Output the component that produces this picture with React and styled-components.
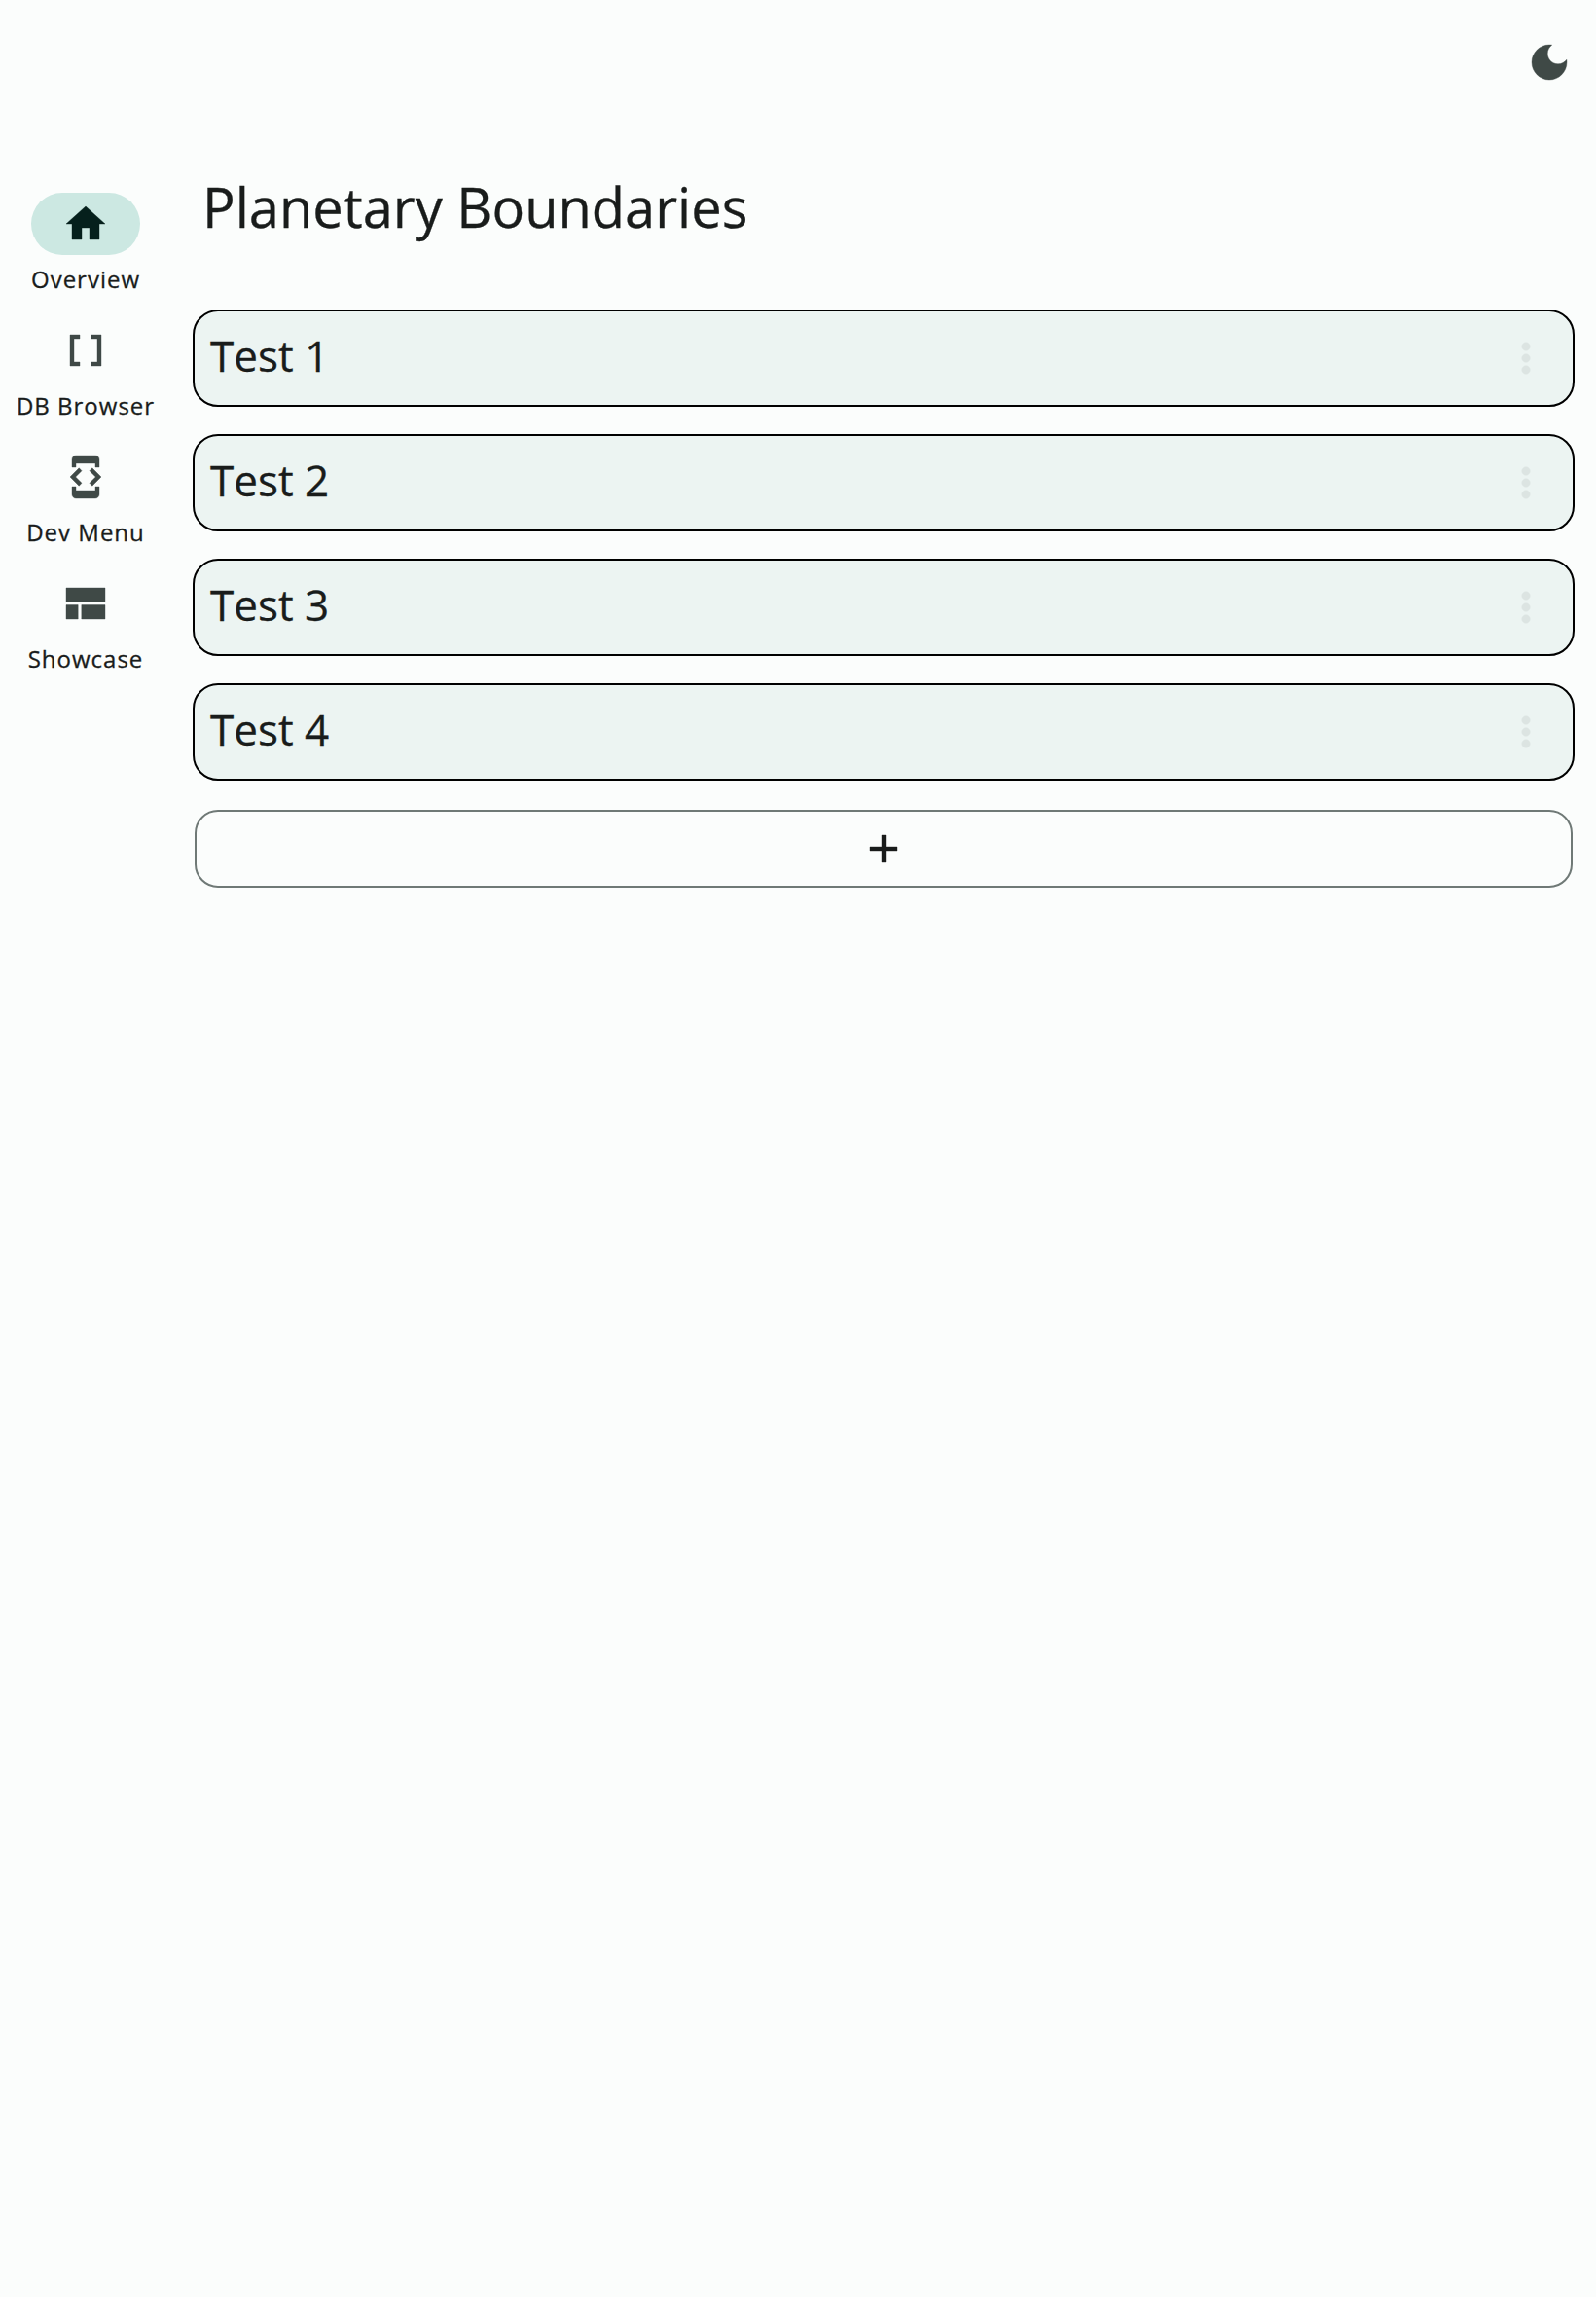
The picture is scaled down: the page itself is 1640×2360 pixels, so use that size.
import React from "react";
import styled, { createGlobalStyle } from "styled-components";

const Global = createGlobalStyle`
  *, *::before, *::after { box-sizing: border-box; }
  html, body { margin: 0; padding: 0; background: #fbfdfc; }
  body { font-family: "Open Sans", "Noto Sans", sans-serif; color: #191c1b; -webkit-text-stroke: 0.3px currentColor; }
  button { font: inherit; color: inherit; margin: 0; padding: 0; border: 0; background: none; cursor: pointer; }
`;

const Page = styled.div`
  display: flex;
  flex-direction: column;
  width: 100%;
  min-height: 2360px;
  background: #fbfdfc;
`;

const TopBar = styled.header`
  display: flex;
  justify-content: flex-end;
  align-items: center;
  height: 128px;
  padding-right: 8px;
`;

const IconButton = styled.button`
  display: flex;
  align-items: center;
  justify-content: center;
  width: ${(p) => p.$size}px;
  height: ${(p) => p.$size}px;
  color: ${(p) => p.$color};
`;

const Icon = styled.svg`
  display: block;
  width: 48px;
  height: 48px;
  fill: currentColor;
  stroke: currentColor;
  stroke-width: ${(p) => p.$stroke};
`;

const Body = styled.div`
  display: flex;
  flex: 1;
`;

const Rail = styled.nav`
  display: flex;
  flex-direction: column;
  flex: none;
  width: 176px;
  padding-top: 70px;
`;

const RailItem = styled.button`
  display: flex;
  flex-direction: column;
  align-items: center;
  height: 130px;
  color: ${(p) => (p.$active ? "#05201c" : "#3f4946")};
`;

const Indicator = styled.span`
  display: flex;
  align-items: center;
  justify-content: center;
  width: 112px;
  height: 64px;
  border-radius: 32px;
  background: ${(p) => (p.$active ? "#cce8e2" : "transparent")};
`;

const RailLabel = styled.span`
  margin-top: 9px;
  font-size: 24px;
  line-height: 32px;
  letter-spacing: 1px;
  white-space: nowrap;
  color: #191c1b;
`;

const Main = styled.main`
  display: flex;
  flex-direction: column;
  flex: 1;
  padding: 48px 22px 0;
`;

const Title = styled.h1`
  margin: 0 0 70px;
  padding-left: 10px;
  font-size: 56px;
  font-weight: 400;
  line-height: 72px;
`;

const List = styled.ul`
  display: flex;
  flex-direction: column;
  gap: 28px;
  margin: 0;
  padding: 0;
  list-style: none;
`;

const Card = styled.li`
  display: flex;
  align-items: center;
  justify-content: space-between;
  height: 100px;
  padding: 0 0 0 16px;
  border: 2px solid #000;
  border-radius: 26px;
  background: #ecf4f2;
`;

const CardTitle = styled.span`
  padding-bottom: 6px;
  font-size: 44px;
  line-height: 56px;
`;

const AddButton = styled.button`
  display: flex;
  align-items: center;
  justify-content: center;
  height: 80px;
  margin: 30px 2px 0;
  && { border: 2px solid #6f7976; }
  border-radius: 24px;
`;

const ICONS = {
  moon: "M12 3c-4.97 0-9 4.03-9 9s4.03 9 9 9 9-4.03 9-9c0-.46-.04-.92-.1-1.36-.98 1.37-2.58 2.26-4.4 2.26-2.98 0-5.4-2.42-5.4-5.4 0-1.81.89-3.42 2.26-4.4-.44-.06-.9-.1-1.36-.1z",
  home: "M10 20v-6h4v6h5v-8h3L12 3 2 12h3v8z",
  array: "M15 4v2h3v12h-3v2h5V4zM4 20h5v-2H6V6h3V4H4z",
  dev: "M7 5h10v2h2V3c0-1.1-.9-1.99-2-1.99L7 1c-1.1 0-2 .9-2 2v4h2V5zm8.41 11.59L20 12l-4.59-4.59L14 8.83 17.17 12 14 15.17l1.41 1.42zM10 15.17L6.83 12 10 8.83 8.59 7.41 4 12l4.59 4.59L10 15.17zM17 19H7v-2H5v4c0 1.1.9 2 2 2h10c1.1 0 2-.9 2-2v-4h-2v2z",
  quilt: "M2 4h20v7.1H2zM2 12.8h6.1V20H2zM9.9 12.8H22V20H9.9z",
  more: "M12 8c1.1 0 2-.9 2-2s-.9-2-2-2-2 .9-2 2 .9 2 2 2zm0 2c-1.1 0-2 .9-2 2s.9 2 2 2 2-.9 2-2-.9-2-2-2zm0 6c-1.1 0-2 .9-2 2s.9 2 2 2 2-.9 2-2-.9-2-2-2z",
  add: "M19 13h-6v6h-2v-6H5v-2h6V5h2v6h6v2z",
};

const Glyph = ({ name, stroke = 0.2 }) => (
  <Icon viewBox="0 0 24 24" aria-hidden="true" $stroke={stroke}>
    <path d={ICONS[name]} />
  </Icon>
);

const NAV = [
  { label: "Overview", icon: "home" },
  { label: "DB Browser", icon: "array" },
  { label: "Dev Menu", icon: "dev" },
  { label: "Showcase", icon: "quilt" },
];

const BOUNDARIES = ["Test 1", "Test 2", "Test 3", "Test 4"];

export default function App() {
  return (
    <Page>
      <Global />
      <TopBar>
        <IconButton $size={80} $color="#3f4946" aria-label="Toggle theme">
          <Glyph name="moon" />
        </IconButton>
      </TopBar>
      <Body>
        <Rail>
          {NAV.map((item, i) => (
            <RailItem key={item.label} $active={i === 0}>
              <Indicator $active={i === 0}>
                <Glyph name={item.icon} />
              </Indicator>
              <RailLabel>{item.label}</RailLabel>
            </RailItem>
          ))}
        </Rail>
        <Main>
          <Title>Planetary Boundaries</Title>
          <List>
            {BOUNDARIES.map((name) => (
              <Card key={name}>
                <CardTitle>{name}</CardTitle>
                <IconButton $size={96} $color="#dce4e2" aria-label="More">
                  <Glyph name="more" stroke={0.5} />
                </IconButton>
              </Card>
            ))}
          </List>
          <AddButton aria-label="Add">
            <Glyph name="add" />
          </AddButton>
        </Main>
      </Body>
    </Page>
  );
}
